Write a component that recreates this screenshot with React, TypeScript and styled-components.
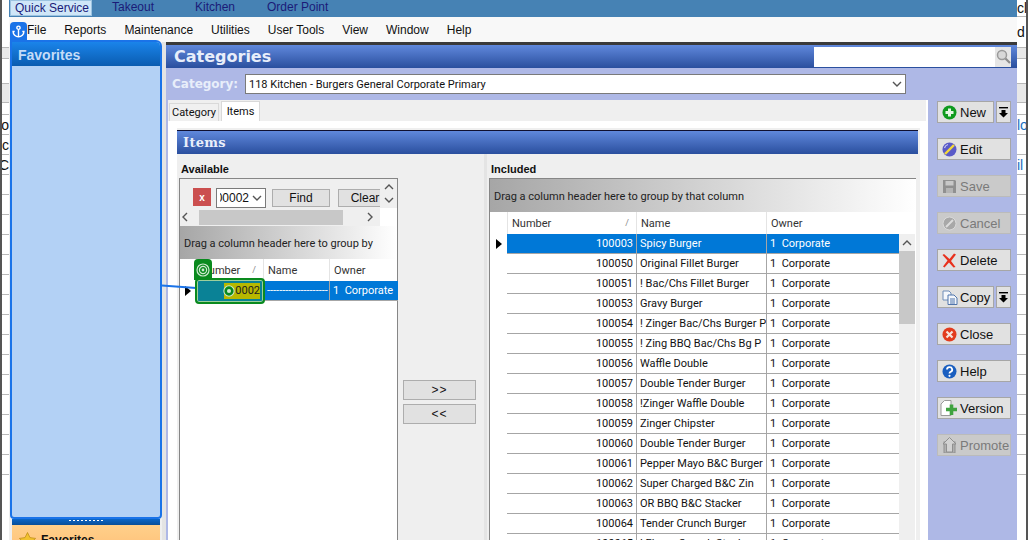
import React from "react";
import styled, { createGlobalStyle } from "styled-components";

const GlobalStyle = createGlobalStyle`
  html, body {
    margin: 0;
    padding: 0;
    background: #ffffff;
  }
  * {
    box-sizing: border-box;
  }
`;

const GRID_FONT = `font-family: Roboto, "Liberation Sans", sans-serif; font-size: 11px;`;

const Screen = styled.div`
  position: relative;
  display: flex;
  width: 1028px;
  height: 540px;
  overflow: hidden;
  background: #ffffff;
  font-family: "Liberation Sans", Arial, sans-serif;
  font-size: 12px;
  color: #111;
`;

/* what shows of the window behind, left and right */
const Edge = styled.div<{ $side: "left" | "right" }>`
  display: flex;
  flex-direction: column;
  flex: none;
  width: ${(p) => (p.$side === "left" ? "9px" : "11px")};
  height: 100%;
  border-left: ${(p) => (p.$side === "left" ? "2px solid #555" : "none")};
  border-right: ${(p) => (p.$side === "right" ? "2px solid #555" : "none")};
`;

const EdgeRow = styled.div<{ $h: number; $band?: boolean; $side: "left" | "right"; $blue?: boolean }>`
  display: flex;
  flex: none;
  align-items: center;
  justify-content: ${(p) => (p.$side === "left" ? "flex-end" : "flex-start")};
  height: ${(p) => p.$h}px;
  overflow: hidden;
  white-space: nowrap;
  background: ${(p) => (p.$band ? "#e8e8e8" : "#ffffff")};
  border-bottom: 1px solid #b8b8b8;
  color: ${(p) => (p.$blue ? "#1a6fc0" : "#111")};
  font-size: 14px;
`;

const Center = styled.div`
  display: flex;
  flex-direction: column;
  flex: none;
  width: 1008px;
  height: 100%;
`;

const TopNav = styled.div`
  display: flex;
  flex: none;
  height: 17px;
  padding-left: 1px;
  background: #4682b4;
`;

const NavTab = styled.div<{ $w: number; $active?: boolean }>`
  flex: none;
  width: ${(p) => p.$w}px;
  height: 16px;
  padding-left: ${(p) => (p.$active ? "4px" : "20px")};
  line-height: 14px;
  color: #1b1b78;
  background: ${(p) => (p.$active ? "#cfe6f8" : "transparent")};
  border: ${(p) => (p.$active ? "1px solid #9cc3e0" : "none")};
  white-space: nowrap;
`;

const MenuBar = styled.div`
  display: flex;
  flex: none;
  align-items: center;
  gap: 18px;
  height: 25px;
  padding-left: 18px;
  background: #f8f8f8;
  color: #111;
`;

const Body = styled.div`
  display: flex;
  flex: 1;
  min-height: 0;
  background: #efefef;
`;

const Sidebar = styled.aside`
  position: relative;
  z-index: 2;
  display: flex;
  flex-direction: column;
  flex: none;
  width: 152px;
  margin: -2px 0 0 1px;
`;

const AnchorTab = styled.div`
  position: absolute;
  top: -18px;
  left: 0;
  display: flex;
  align-items: center;
  justify-content: center;
  width: 17px;
  height: 19px;
  border-radius: 4px 4px 0 0;
  background: #1a73e8;
  color: #ffffff;
`;

const FavPanel = styled.div`
  display: flex;
  flex-direction: column;
  flex: none;
  height: 479px;
  background: #b3d1f5;
  border: 2px solid #1a73e8;
  border-radius: 0 6px 4px 4px;
  overflow: hidden;
`;

const FavHeader = styled.div`
  flex: none;
  height: 24px;
  padding: 3px 0 0 6px;
  background: linear-gradient(#1a84ea, #0a5cb0);
  color: #c4dcf8;
  font-size: 14px;
  font-weight: bold;
  line-height: 20px;
`;

const Grip = styled.div`
  display: flex;
  flex: none;
  justify-content: center;
  align-items: flex-start;
  height: 6px;
  margin-left: 2px;
  width: 148px;
  background: linear-gradient(#0a66c8, #084f98);

  &::before {
    content: "";
    width: 34px;
    height: 1px;
    margin-top: 1px;
    background: repeating-linear-gradient(90deg, #ffffff 0 2px, transparent 2px 4px);
  }
`;

const FavFooter = styled.div`
  display: flex;
  flex: none;
  align-items: flex-start;
  gap: 5px;
  height: 40px;
  width: 148px;
  margin-left: 2px;
  padding: 7px 0 0 7px;
  background: linear-gradient(#ffd08a, #ffb870);
  font-weight: bold;
  font-size: 12px;
  line-height: 16px;
  color: #111;
`;

const DottedSplit = styled.div<{ $w: number }>`
  flex: none;
  width: ${(p) => p.$w}px;
  background-color: #e4e4e4;
  background-image: radial-gradient(#8c8c8c 0.6px, transparent 0.7px);
  background-size: 2px 2px;
`;

const MainWindow = styled.main`
  display: flex;
  flex-direction: column;
  flex: 1;
  min-width: 0;
  border-top: 3px solid #3a3a3a;
  background: #aeb8e6;
`;

const TitleBar = styled.div`
  display: flex;
  flex: none;
  align-items: center;
  justify-content: space-between;
  height: 23px;
  padding: 0 6px 0 8px;
  background: linear-gradient(#6088dc, #2a4f9e);
`;

const Title = styled.h1`
  margin: 0;
  color: #e8eefa;
  font-family: "DejaVu Sans", Verdana, sans-serif;
  font-size: 16px;
  font-weight: bold;
`;

const SearchBox = styled.div`
  display: flex;
  justify-content: flex-end;
  width: 197px;
  height: 20px;
  background: #ffffff;
`;

const SearchIcon = styled.div`
  display: flex;
  align-items: center;
  justify-content: center;
  width: 16px;
  height: 20px;
  background: #e6e6e6;
`;

const CategoryRow = styled.div`
  display: flex;
  flex: none;
  align-items: center;
  height: 32px;
  padding-left: 6px;
  gap: 8px;
`;

const CategoryLabel = styled.label`
  width: 65px;
  color: #e8eefa;
  font-family: "DejaVu Sans", Verdana, sans-serif;
  font-size: 12px;
  font-weight: bold;
  white-space: nowrap;
`;

const ComboBox = styled.div<{ $w: number }>`
  display: flex;
  flex: none;
  align-items: center;
  justify-content: space-between;
  width: ${(p) => p.$w}px;
  height: 20px;
  padding: 0 3px 0 3px;
  border: 1px solid #7a7a7a;
  background: #ffffff;
  white-space: nowrap;
  overflow: hidden;
`;

const CategoryValue = styled.span`
  ${GRID_FONT}
`;

const FilterValue = styled.span`
  display: flex;
  justify-content: flex-end;
  flex: none;
  width: 29px;
  overflow: hidden;
`;

const Workspace = styled.div`
  display: flex;
  flex: 1;
  min-height: 0;
  padding-left: 2px;
`;

const TabsArea = styled.div`
  display: flex;
  flex-direction: column;
  flex: none;
  width: 758px;
  background: #efefef;
`;

const TabStrip = styled.div`
  display: flex;
  flex: none;
  align-items: flex-end;
  height: 21px;
  padding-left: 1px;
  gap: 2px;
`;

const Tab = styled.div<{ $active?: boolean; $w: number }>`
  display: flex;
  align-items: center;
  justify-content: center;
  width: ${(p) => p.$w}px;
  height: ${(p) => (p.$active ? "20px" : "18px")};
  background: ${(p) => (p.$active ? "#ffffff" : "#f0f0f0")};
  border: 1px solid #d9d9d9;
  border-bottom: none;
  ${GRID_FONT}
`;

const TabPage = styled.div`
  display: flex;
  flex: 1;
  min-height: 0;
  padding: 7px 6px 0 9px;
  background: #ffffff;
`;

const ItemsPanel = styled.div`
  display: flex;
  flex-direction: column;
  flex: 1;
  min-width: 0;
  padding-top: 2px;
  background: #efefef;
`;

const ItemsHeader = styled.div`
  flex: none;
  height: 24px;
  margin-right: 2px;
  padding: 4px 0 0 6px;
  border-top: 1px solid #101030;
  background: linear-gradient(#6088dc, #2a4f9e);
  color: #e8eefa;
  font-family: "DejaVu Serif", "DejaVu Sans", serif;
  font-size: 13px;
  font-weight: bold;
  letter-spacing: 0.3px;
`;

const Columns = styled.div`
  display: flex;
  flex: 1;
  min-height: 0;
  padding-left: 2px;
`;

const ListColumn = styled.section<{ $w: number }>`
  display: flex;
  flex-direction: column;
  flex: none;
  width: ${(p) => p.$w}px;
`;

const IncludedColumn = styled(ListColumn)`
  margin-left: 2px;
`;

const ListLabel = styled.div`
  flex: none;
  height: 24px;
  padding: 8px 0 0 2px;
  font-size: 11px;
  font-weight: bold;
  line-height: 14px;
`;

const ListFrame = styled.div`
  display: flex;
  flex-direction: column;
  flex: 1;
  min-height: 0;
  border: 1px solid #868686;
  border-bottom: none;
  background: #ffffff;
`;

const IncludedFrame = styled(ListFrame)`
  border-right: none;
`;

const FilterRow = styled.div`
  display: flex;
  flex: none;
  height: 29px;
`;

const FilterTools = styled.div`
  display: flex;
  flex: 1;
  align-items: flex-start;
  min-width: 0;
  padding: 9px 0 0 13px;
  overflow: hidden;
  background: #efefef;
`;

const ClearFilter = styled.div`
  display: flex;
  flex: none;
  align-items: center;
  justify-content: center;
  width: 18px;
  height: 18px;
  margin-right: 5px;
  background: #cb4f4f;
  color: #ffffff;
  font-size: 10px;
  font-weight: bold;
`;

const FilterButton = styled.div<{ $ml: number; $w: number }>`
  display: flex;
  flex: none;
  align-items: center;
  justify-content: center;
  width: ${(p) => p.$w}px;
  height: 18px;
  margin: 1px 0 0 ${(p) => p.$ml}px;
  border: 1px solid #adadad;
  background: #e1e1e1;
`;

const VScrollStub = styled.div`
  display: flex;
  flex-direction: column;
  flex: none;
  align-items: center;
  justify-content: space-between;
  width: 17px;
  padding: 3px 0;
  background: #efefef;
`;

const HScroll = styled.div`
  display: flex;
  flex: none;
  align-items: center;
  height: 18px;
  width: 200px;
  background: #efefef;
`;

const HThumb = styled.div`
  flex: none;
  width: 144px;
  height: 15px;
  margin: 0 22px 0 9px;
  background: #c8c8c8;
`;

const GroupPanel = styled.div<{ $h: number }>`
  display: flex;
  flex: none;
  align-items: center;
  height: ${(p) => p.$h}px;
  padding: 2px 0 0 4px;
  background: linear-gradient(90deg, #a6a6a6, #ffffff);
  color: #222;
  white-space: nowrap;
  overflow: hidden;
  ${GRID_FONT}
`;

const GridHead = styled.div<{ $cols: string }>`
  display: grid;
  flex: none;
  grid-template-columns: ${(p) => p.$cols};
  height: 22px;
  background: #ffffff;
  color: #333;
  ${GRID_FONT}
`;

const HeadCell = styled.div<{ $sorted?: boolean }>`
  display: flex;
  align-items: center;
  justify-content: space-between;
  padding: 0 4px;
  border-left: 1px solid #e4e4e4;

  &::after {
    content: "${(p) => (p.$sorted ? "/" : "")}";
    font-size: 9px;
    color: #888;
    padding-right: 3px;
  }
`;

const GridRow = styled.div<{ $cols: string }>`
  display: grid;
  flex: none;
  grid-template-columns: ${(p) => p.$cols};
  height: 20px;
  ${GRID_FONT}
`;

const Cell = styled.div<{ $right?: boolean; $selected?: boolean }>`
  padding: 0 3px;
  line-height: 19px;
  text-align: ${(p) => (p.$right ? "right" : "left")};
  white-space: nowrap;
  overflow: hidden;
  border-left: 1px solid #a6a6a6;
  border-bottom: 1px solid #a6a6a6;
  background: ${(p) => (p.$selected ? "#0078d7" : "#ffffff")};
  color: ${(p) => (p.$selected ? "#ffffff" : "#111")};
`;

const NumberCell = styled(Cell)`
  border-left: none;
`;

const RowMarker = styled.div<{ $on?: boolean }>`
  display: flex;
  align-items: center;
  justify-content: center;
  background: #ffffff;

  &::before {
    content: "";
    display: ${(p) => (p.$on ? "block" : "none")};
    border-left: 6px solid #000;
    border-top: 5px solid transparent;
    border-bottom: 5px solid transparent;
  }
`;

const Transfer = styled.div`
  display: flex;
  flex-direction: column;
  flex: none;
  gap: 4px;
  width: 86px;
  padding: 226px 8px 0 5px;
`;

const TransferButton = styled.div`
  display: flex;
  align-items: center;
  justify-content: center;
  height: 20px;
  border: 1px solid #adadad;
  background: #e1e1e1;
  letter-spacing: 1px;
`;

const GridBody = styled.div`
  display: flex;
  flex: 1;
  min-height: 0;
`;

const GridRows = styled.div`
  display: flex;
  flex-direction: column;
  flex: none;
  width: 409px;
`;

const GridScroll = styled.div`
  display: flex;
  flex-direction: column;
  flex: none;
  width: 16px;
  background: #efefef;
`;

const ScrollArrow = styled.div`
  display: flex;
  align-items: center;
  justify-content: center;
  flex: none;
  height: 17px;
`;

const ScrollThumb = styled.div`
  flex: none;
  height: 73px;
  background: #c8c8c8;
`;

const ActionColumn = styled.div`
  display: flex;
  flex-direction: column;
  flex: 1;
  gap: 15px;
  padding: 1px 6px 0 9px;
  border-left: 2px solid #ffffff;
`;

const ActionRow = styled.div`
  display: flex;
  gap: 2px;
`;

const ActionButton = styled.button<{ $disabled?: boolean }>`
  display: flex;
  flex: 1;
  align-items: center;
  gap: 3px;
  height: 22px;
  min-width: 0;
  padding: 0 0 0 4px;
  border: 1px solid ${(p) => (p.$disabled ? "#bbbbbb" : "#a6a6a6")};
  background: ${(p) => (p.$disabled ? "#cacaca" : "#e1e1e1")};
  color: ${(p) => (p.$disabled ? "#7a7a7a" : "#111")};
  font-family: inherit;
  font-size: 13px;
  white-space: nowrap;
`;

const IconSlot = styled.span`
  display: flex;
  flex: none;
  justify-content: center;
  width: 15px;

  svg {
    flex: none;
  }
`;

const DropButton = styled.button`
  display: flex;
  flex: none;
  align-items: center;
  justify-content: center;
  width: 15px;
  height: 22px;
  padding: 0;
  border: 1px solid #a6a6a6;
  background: #e1e1e1;
`;

/* guided tour highlight, sits over the grid */
const TourLine = styled.svg`
  position: absolute;
  top: 280px;
  left: 160px;
  z-index: 3;
`;

const TourTab = styled.div`
  position: absolute;
  top: 259px;
  left: 194px;
  z-index: 3;
  display: flex;
  align-items: center;
  justify-content: center;
  width: 18px;
  height: 21px;
  border-radius: 4px 4px 0 0;
  background: #0a8a1e;
`;

const TourBox = styled.div`
  position: absolute;
  top: 278px;
  left: 195px;
  z-index: 3;
  display: flex;
  align-items: center;
  justify-content: flex-end;
  width: 70px;
  height: 26px;
  padding-right: 3px;
  border: 2px solid #0a8a1e;
  border-radius: 4px;
  background: #0a8296;
  box-shadow: inset 0 0 0 1px #9ccf9c;
`;

const TourText = styled.span`
  position: relative;
  width: 36px;
  background: #b8b800;
  color: #222;
  line-height: 16px;
  text-align: right;
  ${GRID_FONT}
`;

const TourDot = styled.svg`
  position: absolute;
  top: 2px;
  left: -1px;
`;

const Chevron = ({ size = 10, dir = "down", color = "#555" }: { size?: number; dir?: "down" | "up" | "left" | "right"; color?: string }) => {
  const paths = {
    down: "M1 3 L5 7 L9 3",
    up: "M1 7 L5 3 L9 7",
    left: "M7 1 L3 5 L7 9",
    right: "M3 1 L7 5 L3 9",
  };
  return (
    <svg width={size} height={size} viewBox="0 0 10 10">
      <path d={paths[dir]} fill="none" stroke={color} strokeWidth="1.4" />
    </svg>
  );
};

const TargetIcon = ({ size = 14 }: { size?: number }) => (
  <svg width={size} height={size} viewBox="0 0 14 14">
    <circle cx="7" cy="7" r="6" fill="#0a8a1e" stroke="#cfe8cf" strokeWidth="1.2" />
    <circle cx="7" cy="7" r="3.6" fill="none" stroke="#cfe8cf" strokeWidth="1.2" />
    <circle cx="7" cy="7" r="1.4" fill="#cfe8cf" />
  </svg>
);

const DropArrow = () => (
  <svg width="11" height="12" viewBox="0 0 11 12">
    <rect x="1" y="1" width="9" height="1.4" fill="#000" />
    <path d="M3.5 4 H7.5 V7 H10 L5.5 11.5 L1 7 H3.5 Z" fill="#000" />
  </svg>
);

const IconNew = () => (
  <svg width="15" height="15" viewBox="0 0 15 15">
    <circle cx="7.5" cy="7.5" r="7" fill="#0f9a1e" />
    <path d="M3.5 7.5 H11.5 M7.5 3.5 V11.5" stroke="#e4f6e4" strokeWidth="3" />
  </svg>
);

const IconEdit = () => (
  <svg width="15" height="15" viewBox="0 0 15 15">
    <circle cx="7.5" cy="7.5" r="7" fill="#5a5ac8" />
    <path d="M3 12 L12 3" stroke="#f4d83a" strokeWidth="2.4" />
    <path d="M2.5 6 A5 5 0 0 1 6 2.5" stroke="#c9c9f2" strokeWidth="1.2" fill="none" />
  </svg>
);

const IconSave = () => (
  <svg width="15" height="15" viewBox="0 0 15 15">
    <path d="M1 1 H13 L14 2 V14 H1 Z" fill="#909090" />
    <rect x="3.5" y="2" width="8" height="4.5" fill="#c8c8c8" />
    <rect x="4" y="9" width="7" height="5" fill="#b4b4b4" />
  </svg>
);

const IconCancel = () => (
  <svg width="15" height="15" viewBox="0 0 15 15">
    <circle cx="7.5" cy="7.5" r="6.5" fill="#a8a8a8" stroke="#dadada" />
    <path d="M4 11 L11 4" stroke="#dcdcdc" strokeWidth="2" />
  </svg>
);

const IconDelete = () => (
  <svg width="15" height="15" viewBox="0 0 15 15">
    <path d="M2 1 L7.5 6 L12 0.5 L14 1.5 L9 8 L13.5 14 L11.5 14.5 L7 9.5 L2.5 14.5 L1 13.5 L5.5 7.5 L0.5 2 Z" fill="#e8301c" />
  </svg>
);

const IconCopy = () => (
  <svg width="16" height="15" viewBox="0 0 16 15">
    <path d="M1 1 H7 L9 3 V10 H1 Z" fill="#f4f7fc" stroke="#6f8db8" />
    <path d="M6 5 H12 L15 8 V14.5 H6 Z" fill="#f4f7fc" stroke="#4f74ac" />
    <path d="M8 9 H13 M8 11 H13 M8 13 H13" stroke="#4f74ac" />
  </svg>
);

const IconClose = () => (
  <svg width="15" height="15" viewBox="0 0 15 15">
    <circle cx="7.5" cy="7.5" r="7" fill="#e23c1e" />
    <path d="M4.5 4.5 L10.5 10.5 M10.5 4.5 L4.5 10.5" stroke="#f6e4dc" strokeWidth="2.2" />
  </svg>
);

const IconHelp = () => (
  <svg width="15" height="15" viewBox="0 0 15 15">
    <circle cx="7.5" cy="7.5" r="7" fill="#1a5fc0" />
    <path d="M5 5.6 A2.6 2.4 0 1 1 8.6 7.8 Q7.5 8.3 7.5 9.6" fill="none" stroke="#ffffff" strokeWidth="1.8" />
    <circle cx="7.5" cy="11.8" r="1.1" fill="#ffffff" />
  </svg>
);

const IconVersion = () => (
  <svg width="19" height="17" viewBox="0 0 19 17">
    <path d="M1 4 L4.5 0.5 H11 V15.5 H1 Z" fill="#ffffff" stroke="#9a9a9a" />
    <path d="M6 9.5 H17 M11.5 4.5 V15" stroke="#3fa33f" strokeWidth="3.6" />
  </svg>
);

const IconPromote = () => (
  <svg width="17" height="16" viewBox="0 0 17 16">
    <rect x="3" y="5" width="11" height="11" fill="#b0b0b0" stroke="#909090" />
    <path d="M8.5 0.5 L15 7 H11.5 V15 H5.5 V7 H2 Z" fill="#d2d2d2" stroke="#8f8f8f" />
  </svg>
);

const Star = () => (
  <svg width="17" height="16" viewBox="0 0 17 16">
    <path d="M8.5 0.5 L11 5.6 L16.6 6.4 L12.5 10.3 L13.5 15.8 L8.5 13.2 L3.5 15.8 L4.5 10.3 L0.4 6.4 L6 5.6 Z" fill="#f2c230" stroke="#b98a10" strokeWidth="0.7" />
  </svg>
);

const leftEdge = [
  { h: 48 }, { h: 11, band: true }, { h: 25 }, { h: 19, band: true },
  { h: 12 }, { h: 20, text: "io" }, { h: 20, text: "ic" }, { h: 20, text: "C" },
  { h: 20 }, { h: 20 }, { h: 20 }, { h: 20 }, { h: 20 }, { h: 20 }, { h: 20 },
  { h: 20 }, { h: 20 }, { h: 20 }, { h: 20 }, { h: 20 }, { h: 20 }, { h: 20 }, { h: 20 },
];

const rightEdge = [
  { h: 17, text: "cl" }, { h: 31, text: "d" }, { h: 11, band: true }, { h: 25 }, { h: 19, band: true },
  { h: 12 }, { h: 20, text: "lo", blue: true }, { h: 20 }, { h: 20, text: "il", blue: true },
  { h: 20 }, { h: 20 }, { h: 20 }, { h: 20 }, { h: 20 }, { h: 20 }, { h: 20 },
  { h: 20 }, { h: 20 }, { h: 20 }, { h: 20 }, { h: 20 }, { h: 20 }, { h: 20 }, { h: 20 },
];

const menuItems = ["File", "Reports", "Maintenance", "Utilities", "User Tools", "View", "Window", "Help"];

const navTabs = [
  { label: "Quick Service", w: 82, active: true },
  { label: "Takeout", w: 83 },
  { label: "Kitchen", w: 72 },
  { label: "Order Point", w: 90 },
];

const includedRows = [
  ["100003", "Spicy Burger"],
  ["100050", "Original Fillet Burger"],
  ["100051", "! Bac/Chs Fillet Burger"],
  ["100053", "Gravy Burger"],
  ["100054", "! Zinger Bac/Chs Burger P"],
  ["100055", "! Zing BBQ Bac/Chs Bg P"],
  ["100056", "Waffle Double"],
  ["100057", "Double Tender Burger"],
  ["100058", "!Zinger Waffle Double"],
  ["100059", "Zinger Chipster"],
  ["100060", "Double Tender Burger"],
  ["100061", "Pepper Mayo B&C Burger"],
  ["100062", "Super Charged B&C Zin"],
  ["100063", "OR BBQ B&C Stacker"],
  ["100064", "Tender Crunch Burger"],
  ["100065", "! Flame Crunch Stack"],
];

const actions = [
  { label: "New", icon: <IconNew />, drop: true },
  { label: "Edit", icon: <IconEdit /> },
  { label: "Save", icon: <IconSave />, disabled: true },
  { label: "Cancel", icon: <IconCancel />, disabled: true },
  { label: "Delete", icon: <IconDelete /> },
  { label: "Copy", icon: <IconCopy />, drop: true },
  { label: "Close", icon: <IconClose /> },
  { label: "Help", icon: <IconHelp /> },
  { label: "Version", icon: <IconVersion /> },
  { label: "Promote", icon: <IconPromote />, disabled: true },
];

const AVAILABLE_COLS = "16px 67px 66px 69px";
const INCLUDED_COLS = "17px 129px 130px 133px";

export default function App() {
  return (
    <Screen>
      <GlobalStyle />
      <Edge $side="left">
        {leftEdge.map((r, i) => (
          <EdgeRow key={i} $side="left" $h={r.h} $band={r.band}>
            {r.text}
          </EdgeRow>
        ))}
      </Edge>

      <Center>
        <TopNav>
          {navTabs.map((t) => (
            <NavTab key={t.label} $w={t.w} $active={t.active}>
              {t.label}
            </NavTab>
          ))}
        </TopNav>
        <MenuBar>
          {menuItems.map((m) => (
            <span key={m}>{m}</span>
          ))}
        </MenuBar>

        <Body>
          <Sidebar>
            <AnchorTab>
              <svg width="13" height="13" viewBox="0 0 24 24" fill="none" stroke="currentColor" strokeWidth="2.6">
                <circle cx="12" cy="5" r="3" />
                <path d="M12 22V8M5 12H2a10 10 0 0 0 20 0h-3" />
              </svg>
            </AnchorTab>
            <FavPanel>
              <FavHeader>Favorites</FavHeader>
            </FavPanel>
            <Grip />
            <FavFooter>
              <Star />
              Favorites
            </FavFooter>
          </Sidebar>
          <DottedSplit $w={4} />

          <MainWindow>
            <TitleBar>
              <Title>Categories</Title>
              <SearchBox>
                <SearchIcon>
                  <svg width="15" height="15" viewBox="0 0 15 15">
                    <circle cx="6" cy="6" r="4.5" fill="#d8d8d8" stroke="#9a9a9a" strokeWidth="1.5" />
                    <path d="M9.5 9.5 L14 14" stroke="#8c8c8c" strokeWidth="2.2" />
                  </svg>
                </SearchIcon>
              </SearchBox>
            </TitleBar>

            <CategoryRow>
              <CategoryLabel>Category:</CategoryLabel>
              <ComboBox $w={661}>
                <CategoryValue>118 Kitchen - Burgers General Corporate Primary</CategoryValue>
                <Chevron />
              </ComboBox>
            </CategoryRow>

            <Workspace>
              <TabsArea>
                <TabStrip>
                  <Tab $w={50}>Category</Tab>
                  <Tab $active $w={39}>Items</Tab>
                </TabStrip>
                <TabPage>
                  <ItemsPanel>
                    <ItemsHeader>Items</ItemsHeader>
                    <Columns>
                      <ListColumn $w={219}>
                        <ListLabel>Available</ListLabel>
                        <ListFrame>
                          <FilterRow>
                            <FilterTools>
                              <ClearFilter>x</ClearFilter>
                              <ComboBox $w={50}>
                                <FilterValue>00002</FilterValue>
                                <Chevron />
                              </ComboBox>
                              <FilterButton $ml={6} $w={58}>Find</FilterButton>
                              <FilterButton $ml={8} $w={54}>Clear</FilterButton>
                            </FilterTools>
                            <VScrollStub>
                              <Chevron dir="up" />
                              <Chevron dir="down" />
                            </VScrollStub>
                          </FilterRow>
                          <HScroll>
                            <Chevron dir="left" />
                            <HThumb />
                            <Chevron dir="right" />
                          </HScroll>
                          <GroupPanel $h={33}>Drag a column header here to group by</GroupPanel>
                          <GridHead $cols={AVAILABLE_COLS}>
                            <div />
                            <HeadCell $sorted>Number</HeadCell>
                            <HeadCell>Name</HeadCell>
                            <HeadCell>Owner</HeadCell>
                          </GridHead>
                          <GridRow $cols={AVAILABLE_COLS}>
                            <RowMarker $on />
                            <NumberCell $right $selected>00002</NumberCell>
                            <Cell $selected>--------------------</Cell>
                            <Cell $selected>1&nbsp; Corporate</Cell>
                          </GridRow>
                        </ListFrame>
                      </ListColumn>

                      <Transfer>
                        <TransferButton>&gt;&gt;</TransferButton>
                        <TransferButton>&lt;&lt;</TransferButton>
                      </Transfer>
                      <DottedSplit $w={3} />
                      <IncludedColumn $w={427}>
                        <ListLabel>Included</ListLabel>
                        <IncludedFrame>
                          <GroupPanel $h={33}>Drag a column header here to group by that column</GroupPanel>
                          <GridHead $cols={INCLUDED_COLS}>
                            <div />
                            <HeadCell $sorted>Number</HeadCell>
                            <HeadCell>Name</HeadCell>
                            <HeadCell>Owner</HeadCell>
                          </GridHead>
                          <GridBody>
                            <GridRows>
                              {includedRows.map((r, i) => (
                                <GridRow key={r[0]} $cols={INCLUDED_COLS}>
                                  <RowMarker $on={i === 0} />
                                  <NumberCell $right $selected={i === 0}>{r[0]}</NumberCell>
                                  <Cell $selected={i === 0}>{r[1]}</Cell>
                                  <Cell $selected={i === 0}>1&nbsp; Corporate</Cell>
                                </GridRow>
                              ))}
                            </GridRows>
                            <GridScroll>
                              <ScrollArrow>
                                <Chevron dir="up" />
                              </ScrollArrow>
                              <ScrollThumb />
                            </GridScroll>
                          </GridBody>
                        </IncludedFrame>
                      </IncludedColumn>
                    </Columns>
                  </ItemsPanel>
                </TabPage>
              </TabsArea>

              <ActionColumn>
                {actions.map((a) => (
                  <ActionRow key={a.label}>
                    <ActionButton $disabled={a.disabled}>
                      <IconSlot>{a.icon}</IconSlot>
                      {a.label}
                    </ActionButton>
                    {a.drop && (
                      <DropButton>
                        <DropArrow />
                      </DropButton>
                    )}
                  </ActionRow>
                ))}
              </ActionColumn>
            </Workspace>
          </MainWindow>
        </Body>
      </Center>

      <Edge $side="right">
        {rightEdge.map((r, i) => (
          <EdgeRow key={i} $side="right" $h={r.h} $band={r.band} $blue={r.blue}>
            {r.text}
          </EdgeRow>
        ))}
      </Edge>

      <TourLine width="40" height="12" viewBox="0 0 40 12">
        <path d="M2 5.5 L36 8" stroke="#1a73e8" strokeWidth="2" />
      </TourLine>
      <TourTab>
        <TargetIcon />
      </TourTab>
      <TourBox>
        <TourText>
          <TourDot width="12" height="12" viewBox="0 0 14 14">
            <circle cx="7" cy="7" r="6" fill="#0a8a1e" stroke="#cfe8cf" strokeWidth="1.2" />
            <circle cx="7" cy="7" r="2.4" fill="#cfe8cf" />
          </TourDot>
          0002
        </TourText>
      </TourBox>
    </Screen>
  );
}
